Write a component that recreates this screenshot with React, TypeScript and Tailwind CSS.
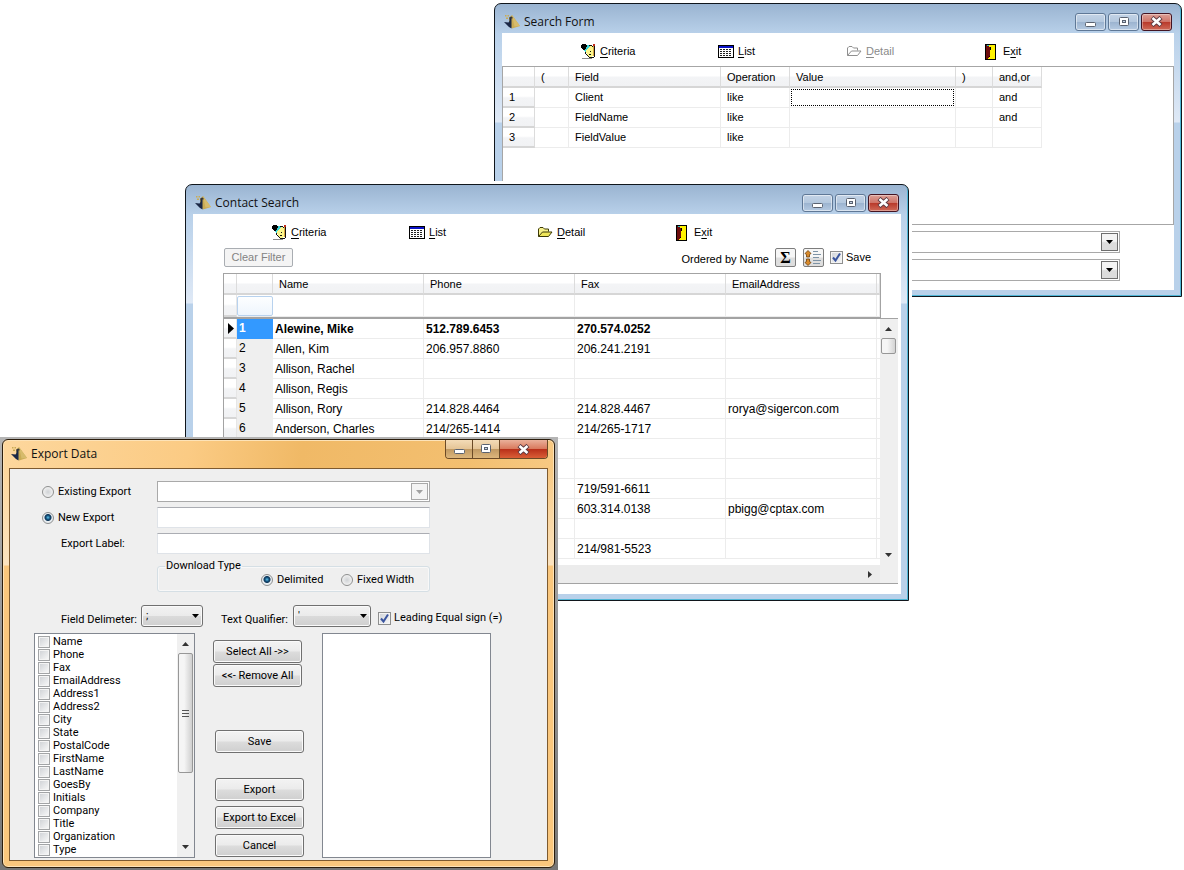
import type React from "react"
import { useState } from "react"
import clsx from "clsx"

const ARIAL = "font-['Liberation_Sans',Arial,sans-serif]"

/* ---------- icons ---------- */

function AppIcon() {
  return (
    <svg width="16" height="16" viewBox="0 0 16 16" aria-hidden="true">
      <path d="M1 1h1.500v1.500H1zM3.500 1h1.500v1.500H3.500zM2 3.500h2V5H2z" fill="#c9ab55" />
      <path d="M8 1L16 12L8 14.500L5 10V4Z" fill="#c9ab55" />
      <path d="M8 1L16 12L10.500 12.500Z" fill="#d6bb6c" />
      <path d="M0 8L4.500 8.500L5.500 7V3.500L7.500 3V14.500L5 13Z" fill="#1b2846" />
      <path d="M5.500 3.500L7 2.500L8.500 3V4.500H5.500Z" fill="#3b3a3a" />
    </svg>
  )
}

function CriteriaIcon() {
  return (
    <svg width="15" height="15" viewBox="0 0 15 15" shapeRendering="crispEdges" aria-hidden="true">
      <path d="M8 2h3v1h1v9h-1v1h-3v-1h-1v-1h-1v-2h-1v-3h1v-2h1v-1h1z" fill="#fbf58a" />
      <path d="M1 0h4v1h1v2h-1v2h-1v1h-2v-1h-1v-1h-1v-3h1z" fill="#000" />
      <path d="M6 1h2v1h1v1h-1v1h-1v1h-1v1h-1v2h-1v-1h-1v-1h1v-1h1v-2h1z" fill="#3fd6da" />
      <path d="M8 1h3v1H8zM11 2h1v1h-1zM4 8h1v2H4zM5 10h1v1H5zM6 11h1v1H6zM7 12h1v1H7zM8 13h5v1H8zM9 7h1v1H9zM8 10h2v1H8z" fill="#111" />
      <path d="M12 0h2v2h-2z" fill="#c22a1a" />
      <path d="M12 2h1v10h-1z" fill="#d9a441" />
      <path d="M13 2h1v11h-1zM12 13h1v1h-1z" fill="#111" />
      <path d="M1 14h10v1H1z" fill="#8a8a8a" />
    </svg>
  )
}

function ListIcon() {
  return (
    <svg width="16" height="13" viewBox="0 0 16 13" shapeRendering="crispEdges" aria-hidden="true">
      <path d="M0 0h16v13H0z" fill="#000" />
      <path d="M1 1h14v2H1z" fill="#0a12c8" />
      <path d="M1 3h14v9H1z" fill="#fff" />
      <path
        d="M2 5H14M2 7H14M2 9H14M2 11H14"
        transform="translate(0 -.5)"
        stroke="#222"
        strokeDasharray="2 1"
      />
    </svg>
  )
}

function FolderIcon({ disabled }: { disabled?: boolean }) {
  return (
    <svg width="15" height="11" viewBox="0 0 15 11" aria-hidden="true">
      <path
        d="M.5 9.500V2L2 .5H5L6.500 2H10.500V4.500"
        fill={disabled ? "#fff" : "#f6f08a"}
        stroke={disabled ? "#8f8f8f" : "#3d3b08"}
      />
      <path
        d="M.5 9.500L4.500 5H14L10.500 9.500Z"
        fill={disabled ? "#fff" : "#efe65a"}
        stroke={disabled ? "#8f8f8f" : "#3d3b08"}
      />
    </svg>
  )
}

function ExitIcon() {
  return (
    <svg width="11" height="16" viewBox="0 0 11 16" shapeRendering="crispEdges" aria-hidden="true">
      <path d="M0 0h11v16H0z" fill="#000" />
      <path d="M4 1h6v14H3v-2h1z" fill="#fff200" />
      <path d="M1 1h3v2h1v9H4v2H3v1H1z" fill="#6e0d0d" />
      <path d="M2 1h2v1H2z" fill="#2ec4c4" />
      <path d="M5 3h1v3H5zM4 12h1v1H4z" fill="#000" />
    </svg>
  )
}

function SortIcon() {
  return (
    <svg width="18" height="16" viewBox="0 0 18 16" aria-hidden="true">
      <path d="M4 .5L7 3.500L5.500 4.500V7H2.500V4.500L1 3.500Z" fill="#d98a2b" stroke="#6d3f0b" strokeWidth=".8" />
      <path d="M4 15.500L7 12.500L5.500 11.500V9H2.500V11.500L1 12.500Z" fill="#d98a2b" stroke="#6d3f0b" strokeWidth=".8" />
      <path d="M9 1.500h5M9 4.500h8M9 7.500h6M9 10.500h8M9 13.500h7" stroke="#7d93a6" />
    </svg>
  )
}

function Arrow({ dir, className }: { dir: "up" | "down" | "right"; className?: string }) {
  const d = { up: "M0 4h7L3.500 0z", down: "M0 0h7L3.500 4z", right: "M0 0v7l4-3.500z" }[dir]
  const right = dir === "right"
  return (
    <svg
      className={className}
      width={right ? 4 : 7}
      height={right ? 7 : 4}
      viewBox={right ? "0 0 4 7" : "0 0 7 4"}
      fill="currentColor"
      aria-hidden="true"
    >
      <path d={d} />
    </svg>
  )
}

function MinGlyph() {
  return (
    <svg width="13" height="12" viewBox="0 0 13 12" aria-hidden="true">
      <rect x="1.500" y="6.500" width="10" height="4" rx="1" fill="#fff" stroke="#5a6270" />
    </svg>
  )
}

function MaxGlyph() {
  return (
    <svg width="12" height="10" viewBox="0 0 12 10" aria-hidden="true">
      <rect x="1.500" y=".5" width="9" height="8" rx="1" fill="#fff" stroke="#5a6270" />
      <rect x="4.500" y="3.500" width="3" height="2" fill="#c7d5e6" stroke="#5a6270" />
    </svg>
  )
}

function CloseGlyph() {
  return (
    <svg width="13" height="11" viewBox="0 0 13 11" aria-hidden="true">
      <path d="M2 1.500L11 9.500M11 1.500L2 9.500" stroke="#5b3a42" strokeWidth="4.400" />
      <path d="M2.500 2L10.500 9M10.500 2L2.500 9" stroke="#fff" strokeWidth="2.600" />
    </svg>
  )
}

/* ---------- shared pieces ---------- */

function Title({ children }: { children: React.ReactNode }) {
  return (
    <>
      <AppIcon />
      <h2 className="ml-1 font-['Open_Sans','Segoe_UI',sans-serif] text-xs text-[#111]">{children}</h2>
    </>
  )
}

const captionBtn = "grid h-[18px] w-[31px] place-items-center rounded-[3px] border"
const blueBtn =
  "border-[#5f7896] bg-[linear-gradient(#c3d3e6_0,#b4c8de_48%,#9cb4d0_52%,#b5cae2_100%)] shadow-[inset_0_0_0_1px_rgba(255,255,255,.5)]"

function BlueWindow({ title, className, children }: { title: string; className: string; children: React.ReactNode }) {
  return (
    <section
      aria-label={title}
      className={clsx(
        "absolute rounded-t-[7px] border border-[#10161c] px-[7px] pb-[6px]",
        "bg-[linear-gradient(#9ab4d1_0,#b9d1ea_30px,#dfe9f6_118px,#b9d1ea_119px)]",
        className
      )}
    >
      <header className="flex h-[29px] items-center pl-[2px] pt-[6px]">
        <Title>{title}</Title>
        <div className="ml-auto flex gap-[2px] pr-[2px]">
          <button aria-label="Minimize" className={clsx(captionBtn, blueBtn)}><MinGlyph /></button>
          <button aria-label="Maximize" className={clsx(captionBtn, blueBtn)}><MaxGlyph /></button>
          <button
            aria-label="Close"
            className={clsx(
              captionBtn,
              "border-[#431422] bg-[linear-gradient(#dca097_0,#cf7468_48%,#b93a2b_52%,#cf6a58_100%)] shadow-[inset_0_0_0_1px_rgba(255,255,255,.35)]"
            )}
          >
            <CloseGlyph />
          </button>
        </div>
      </header>
      <div className="bg-white">{children}</div>
    </section>
  )
}

function ToolButton({ icon, label, hot = 0, disabled }: { icon: React.ReactNode; label: string; hot?: number; disabled?: boolean }) {
  return (
    <button disabled={disabled} className="flex items-center gap-1 text-[11px] text-black disabled:text-[#8a8a8a]">
      {icon}
      <span>
        {label.slice(0, hot)}
        <span className="underline underline-offset-2">{label[hot]}</span>
        {label.slice(hot + 1)}
      </span>
    </button>
  )
}

function Toolbar({ detailDisabled }: { detailDisabled?: boolean }) {
  return (
    <div role="toolbar" className="grid h-[33px] grid-cols-[137px_129px_138px_1fr] pl-[79px] pt-1">
      <ToolButton icon={<CriteriaIcon />} label="Criteria" />
      <ToolButton icon={<ListIcon />} label="List" />
      <ToolButton icon={<FolderIcon disabled={detailDisabled} />} label="Detail" disabled={detailDisabled} />
      <ToolButton icon={<span className="pr-[3px]"><ExitIcon /></span>} label="Exit" hot={1} />
    </div>
  )
}

function Check({ id, checked, onChange }: { id: string; checked: boolean; onChange: () => void }) {
  return (
    <span className="relative block size-[13px] shrink-0">
      <input
        id={id}
        type="checkbox"
        checked={checked}
        onChange={onChange}
        className="peer block size-[13px] appearance-none border border-[#8e8f8f] bg-[linear-gradient(135deg,#cfd3d8,#f8f8f8)] shadow-[inset_0_0_0_1px_#f4f4f4]"
      />
      <svg className="pointer-events-none absolute inset-0 hidden peer-checked:block" width="13" height="13" viewBox="0 0 13 13" aria-hidden="true">
        <path d="M3 6.500L5.500 9.500L10 2.500" fill="none" stroke="#3a559f" strokeWidth="2" />
      </svg>
    </span>
  )
}

const radioCls =
  "size-3 shrink-0 appearance-none rounded-full border border-[#8e8f8f] bg-[radial-gradient(circle,#cfd2d5_0,#f1f1f1_5px)] checked:bg-[radial-gradient(circle_at_50%_45%,#5cc3ea_0,#14507c_2px,#0d3557_3px,#e8edf1_4px)]"

/* ---------- search form ---------- */

const conditions = [
  { field: "Client", op: "like", join: "and" },
  { field: "FieldName", op: "like", join: "and" },
  { field: "FieldValue", op: "like", join: "" },
]

const headBg = "bg-[linear-gradient(#fff_0,#fff_45%,#f3f4f6_55%,#f1f2f4_100%)]"

function ComboRow({ label }: { label: string }) {
  return (
    <div className="relative ml-[60px] mr-[54px]">
      <select aria-label={label} className="block h-[22px] w-full appearance-none border border-[#a9a9a9] bg-white" />
      <span className="pointer-events-none absolute right-[2px] top-[2px] grid h-[18px] w-[17px] place-items-center border border-[#6e6e6e] bg-[linear-gradient(#f4f4f4_45%,#dcdcdc_55%)]">
        <Arrow dir="down" />
      </span>
    </div>
  )
}

function SearchForm() {
  const th = clsx("h-[21px] border-b-2 border-r border-b-[#d6d6d6] border-r-[#dcdcdc] px-[6px] pt-[2px] text-left font-normal", headBg)
  const td = "h-5 border-b border-r border-[#ececec] px-[6px]"
  return (
    <BlueWindow title="Search Form" className="left-[494px] top-[3px] w-[688px] shadow-[inset_-1px_-1px_0_#4fb6d6]">
      <Toolbar detailDisabled />
      <div className="h-[159px] border border-[#a6a6a6]">
        <table className="w-[539px] table-fixed border-separate border-spacing-0 text-[11px] text-black">
          <colgroup>
            <col className="w-8" />
            <col className="w-[34px]" />
            <col className="w-[152px]" />
            <col className="w-[69px]" />
            <col className="w-[166px]" />
            <col className="w-[37px]" />
            <col className="w-[49px]" />
          </colgroup>
          <thead>
            <tr>
              {["", "(", "Field", "Operation", "Value", ")", "and,or"].map((h, i) => (
                <th key={i} className={th}>{h}</th>
              ))}
            </tr>
          </thead>
          <tbody>
            {conditions.map((c, i) => (
              <tr key={c.field}>
                <th scope="row" className={clsx("h-5 border-b-2 border-r border-b-[#d6d6d6] border-r-[#dcdcdc] px-[6px] pt-px text-left font-normal", headBg)}>
                  {i + 1}
                </th>
                <td className={td} />
                <td className={td}>{c.field}</td>
                <td className={td}>{c.op}</td>
                <td className="h-5 border-b border-r border-[#ececec] p-px">
                  <input
                    aria-label={`Value ${i + 1}`}
                    className={clsx("block h-[17px] w-full bg-white px-1 outline-none", i === 0 && "border border-dotted border-black")}
                  />
                </td>
                <td className={td} />
                <td className={td}>{c.join}</td>
              </tr>
            ))}
          </tbody>
        </table>
      </div>
      <div className="flex flex-col gap-[6px] pb-[9px] pt-[6px]">
        <ComboRow label="Saved search" />
        <ComboRow label="Saved list" />
      </div>
    </BlueWindow>
  )
}

/* ---------- contact search ---------- */

interface Contact {
  name?: string
  phone?: string
  fax?: string
  email?: string
}

const contacts: Contact[] = [
  { name: "Alewine, Mike", phone: "512.789.6453", fax: "270.574.0252" },
  { name: "Allen, Kim", phone: "206.957.8860", fax: "206.241.2191" },
  { name: "Allison, Rachel" },
  { name: "Allison, Regis" },
  { name: "Allison, Rory", phone: "214.828.4464", fax: "214.828.4467", email: "rorya@sigercon.com" },
  { name: "Anderson, Charles", phone: "214/265-1414", fax: "214/265-1717" },
  {},
  {},
  { fax: "719/591-6611" },
  { fax: "603.314.0138", email: "pbigg@cptax.com" },
  {},
  { fax: "214/981-5523" },
]

function ContactCols() {
  return (
    <colgroup>
      <col className="w-[13px]" />
      <col className="w-[36px]" />
      <col className="w-[151px]" />
      <col className="w-[151px]" />
      <col className="w-[151px]" />
      <col className="w-[151px]" />
      <col className="w-[3px]" />
    </colgroup>
  )
}

const gridTable = "w-[656px] table-fixed border-separate border-spacing-0 text-black"
const smallBtn = "grid h-[19px] w-[21px] place-items-center rounded-[2px] border border-[#7d7d7d] bg-[linear-gradient(#f6f6f6_45%,#dedede_55%)]"

function ContactSearch() {
  const [save, setSave] = useState(true)
  const td = "h-5 overflow-hidden whitespace-nowrap border-b border-r border-[#ececec] px-[2px] pt-px"
  const stub = clsx("border-b-2 border-r border-b-[#d6d6d6] border-r-[#e6e6e6]", headBg)
  return (
    <BlueWindow
      title="Contact Search"
      className="left-[185px] top-[184px] w-[724px] shadow-[inset_-1px_-1px_0_#4fb6d6,0_0_0_3px_#fff]"
    >
      <Toolbar />
      <div className="flex h-[21px] items-center pl-[31px] pr-[30px] text-[11px]">
        <button disabled className="h-[19px] w-[69px] rounded-[2px] border border-[#a9adb2] bg-[#f4f4f4] text-[#838383]">
          Clear Filter
        </button>
        <span className="ml-auto pt-[3px]">Ordered by Name</span>
        <button aria-label="Sum" className={clsx(smallBtn, "ml-[6px] font-['Liberation_Serif',serif] text-base leading-[17px] font-bold")}>
          Σ
        </button>
        <button aria-label="Sort order" className={clsx(smallBtn, "ml-[7px]")}><SortIcon /></button>
        <label htmlFor="save-order" className="ml-[6px] flex items-center gap-[3px]">
          <Check id="save-order" checked={save} onChange={() => setSave(!save)} />
          Save
        </label>
      </div>
      <div className="pb-[10px] pl-[30px] pr-[3px] pt-[5px]">
        <div className="w-[658px] border border-[#a3a3a3]">
          <table className={clsx(gridTable, "text-[11px]")}>
            <ContactCols />
            <thead>
              <tr>
                {["", "", "Name", "Phone", "Fax", "EmailAddress", ""].map((h, i) => (
                  <th
                    key={i}
                    className={clsx(
                      "h-[21px] border-b-2 border-r border-b-[#d6d6d6] border-r-[#dcdcdc] text-left font-normal",
                      i > 1 && i < 6 ? "px-[6px] pt-[2px]" : "p-0",
                      headBg
                    )}
                  >
                    {h}
                  </th>
                ))}
              </tr>
            </thead>
            <tbody>
              <tr>
                <td className={clsx("h-[22px] p-0", stub)} />
                <td className="h-[22px] border-b border-[#ececec] p-0">
                  <input aria-label="Row filter" className="block h-5 w-full rounded-[2px] border border-[#b8d2ee] bg-[linear-gradient(#fdfeff,#eef5fd)] outline-none" />
                </td>
                {[0, 1, 2, 3, 4].map((i) => (
                  <td key={i} className="border-b border-r border-[#ececec] p-0" />
                ))}
              </tr>
            </tbody>
          </table>
        </div>
        <div className="grid grid-cols-[1fr_18px] border border-[#a3a3a3]">
          <table className={clsx(gridTable, "mb-[6px] text-xs")}>
            <ContactCols />
            <tbody>
              {contacts.map((c, i) => (
                <tr key={i} className={clsx(i === 0 && "font-bold")}>
                  <td className={clsx("h-5 p-0 pl-[4px]", stub)}>
                    {i === 0 && (
                      <svg width="6" height="11" viewBox="0 0 6 11" aria-label="current row"><path d="M0 0v11l6-5.500z" /></svg>
                    )}
                  </td>
                  <td
                    className={clsx(
                      "h-5 p-0 pl-[2px] align-top leading-[18px]",
                      i === 0 ? "bg-[#3399ff] text-white" : "bg-[#efefef]"
                    )}
                  >
                    {i < 6 ? i + 1 : ""}
                  </td>
                  <td className={td}>{c.name}</td>
                  <td className={td}>{c.phone}</td>
                  <td className={td}>{c.fax}</td>
                  <td className={td}>{c.email}</td>
                  <td className="border-b border-[#ececec] p-0" />
                </tr>
              ))}
            </tbody>
          </table>
          <div className="flex flex-col items-center bg-[#efefef] py-[8px] pr-[2px] text-[#333]">
            <Arrow dir="up" />
            <div className="mt-[7px] h-4 w-[15px] rounded-[2px] border border-[#979797] bg-[linear-gradient(90deg,#f5f5f5_40%,#d3d3d3)]" />
            <Arrow dir="down" className="mt-auto" />
          </div>
          <div className="flex h-[18px] items-center justify-end bg-[#ececec] pr-[8px] text-[#333]">
            <Arrow dir="right" />
          </div>
          <div className="bg-[#efefef]" />
        </div>
      </div>
    </BlueWindow>
  )
}

/* ---------- export dialog ---------- */

const exportFields = [
  "Name", "Phone", "Fax", "EmailAddress", "Address1", "Address2", "City", "State", "PostalCode",
  "FirstName", "LastName", "GoesBy", "Initials", "Company", "Title", "Organization", "Type",
]

const pushBtn =
  "h-[23px] w-[89px] rounded-[3px] border border-[#707070] bg-[linear-gradient(#f3f3f3_0,#ebebeb_48%,#dcdcdc_52%,#cfcfcf_100%)] shadow-[inset_0_0_0_1px_#fafafa]"
const textBox = "block h-[21px] w-[273px] border border-[#dfe3e8] border-t-[#abadb3] bg-white px-1 outline-none"
const goldBtn = "grid w-[27px] place-items-center border-r border-[#6b4a26] bg-[linear-gradient(#f4dcb8_0,#e5c597_48%,#c19a63_52%,#dcb67c_100%)]"

function MiniSelect({ id, value, className }: { id: string; value: string; className: string }) {
  return (
    <span className={clsx("relative block", className)}>
      <select
        id={id}
        className="block h-[22px] w-full appearance-none rounded-[3px] border border-[#707070] bg-[linear-gradient(#f2f2f2_0,#ebebeb_48%,#dadada_52%,#cfcfcf_100%)] px-1 shadow-[inset_0_0_0_1px_#fafafa]"
      >
        <option>{value}</option>
      </select>
      <Arrow dir="down" className="pointer-events-none absolute right-1 top-[9px]" />
    </span>
  )
}

function ExportDialog() {
  const [mode, setMode] = useState("new")
  const [type, setType] = useState("delimited")
  const [leading, setLeading] = useState(true)
  const [picked, setPicked] = useState<string[]>([])

  const toggle = (f: string) => setPicked(picked.includes(f) ? picked.filter((p) => p !== f) : [...picked, f])

  return (
    <div className="absolute left-0 top-[437px] w-[558px] bg-[linear-gradient(#b4b4b4,#767676)] pb-[2px] pl-[2px] pr-[3px] pt-[2px]">
      <section
        aria-label="Export Data"
        className="rounded-[6px] border border-[#2b1d0c] bg-[linear-gradient(transparent_28px,#fbe3c0_125px,#fac77d_126px),linear-gradient(100deg,#fdd79d_0,#fbcb84_30%,#f0b966_48%,#f3bf70_75%,#fbd192_100%)] px-[6px] pb-[6px] shadow-[inset_0_0_0_1px_#fde3b8]"
      >
        <header className="flex h-7 items-start pl-[2px]">
          <div className="flex items-center pt-[6px]">
            <Title>Export Data</Title>
          </div>
          <div className="ml-auto flex h-[19px] overflow-hidden rounded-b-[4px] border border-t-0 border-[#6b4a26]">
            <button aria-label="Minimize" className={goldBtn}><MinGlyph /></button>
            <button aria-label="Maximize" className={goldBtn}><MaxGlyph /></button>
            <button aria-label="Close" className="grid w-[47px] place-items-center bg-[linear-gradient(#eab09a_0,#d97a5e_48%,#b9301a_52%,#da5f37_100%)]"><CloseGlyph /></button>
          </div>
        </header>

        <form className="border border-[#7d5a30] bg-[#efefef] pb-[2px] pt-3 font-[Roboto,Tahoma,sans-serif] text-[11px] leading-[14px] text-black">
          <div className="flex flex-col gap-[5px]">
            <div className="flex items-center">
              <label className="flex w-[147px] items-center gap-1 pl-8">
                <input type="radio" name="mode" className={radioCls} checked={mode === "existing"} onChange={() => setMode("existing")} />
                Existing Export
              </label>
              <span className="relative block">
                <select aria-label="Existing export" disabled className="block h-[21px] w-[273px] appearance-none border border-[#a9a9a9] bg-white opacity-100" />
                <span className="pointer-events-none absolute right-[2px] top-[2px] grid h-[17px] w-[17px] place-items-center border border-[#a9a9a9] bg-[#f4f4f4] text-[#a0a0a0]">
                  <Arrow dir="down" />
                </span>
              </span>
            </div>
            <div className="flex items-center">
              <label className="flex w-[147px] items-center gap-1 pl-8">
                <input type="radio" name="mode" className={radioCls} checked={mode === "new"} onChange={() => setMode("new")} />
                New Export
              </label>
              <input aria-label="New export name" className={textBox} />
            </div>
            <div className="flex items-center">
              <label htmlFor="export-label" className="w-[147px] pl-[51px]">Export Label:</label>
              <input id="export-label" className={textBox} />
            </div>
          </div>

          <fieldset className="ml-[147px] mt-[5px] flex w-[273px] rounded-[3px] border border-[#d5dfe5] pb-[4px] pl-[103px] shadow-[inset_0_0_0_1px_#f8f8f8]">
            <legend className="-ml-24 px-px">Download Type</legend>
            <label className="flex w-20 items-center gap-1">
              <input type="radio" name="type" className={radioCls} checked={type === "delimited"} onChange={() => setType("delimited")} />
              Delimited
            </label>
            <label className="flex items-center gap-1">
              <input type="radio" name="type" className={radioCls} checked={type === "fixed"} onChange={() => setType("fixed")} />
              Fixed Width
            </label>
          </fieldset>

          <div className="mt-[13px] flex items-end pl-[51px]">
            <label htmlFor="delimiter" className="w-20">Field Delimeter:</label>
            <MiniSelect id="delimiter" value=";" className="w-[62px]" />
            <label htmlFor="qualifier" className="ml-[18px] w-[72px]">Text Qualifier:</label>
            <MiniSelect id="qualifier" value="'" className="w-[78px]" />
            <label htmlFor="leading-equal" className="ml-[7px] flex items-center gap-[3px] self-center pt-1">
              <Check id="leading-equal" checked={leading} onChange={() => setLeading(!leading)} />
              Leading Equal sign (=)
            </label>
          </div>

          <div className="mt-[6px] flex pl-6">
            <div className="flex w-[161px] border border-[#828790] bg-white">
              <ul className="flex-1 pb-px pl-[3px] pt-px">
                {exportFields.map((f) => (
                  <li key={f}>
                    <label className="flex h-[13px] items-center gap-[3px] leading-[13px]">
                      <input
                        type="checkbox"
                        checked={picked.includes(f)}
                        onChange={() => toggle(f)}
                        className="size-3 appearance-none border border-[#a2a4a6] bg-[linear-gradient(135deg,#cdd0d4,#fafafa)] shadow-[inset_0_0_0_1px_#f4f4f4] checked:bg-[#3a559f]"
                      />
                      {f}
                    </label>
                  </li>
                ))}
              </ul>
              <div className="flex w-[17px] flex-col items-center bg-[#f0f0f0] py-[8px] text-[#333]">
                <Arrow dir="up" />
                <div className="mt-[7px] flex h-[120px] w-[15px] flex-col items-center justify-center gap-[2px] rounded-[2px] border border-[#979797] bg-[linear-gradient(90deg,#f5f5f5_40%,#cfcfcf)]">
                  <span className="h-px w-[7px] bg-[#555]" />
                  <span className="h-px w-[7px] bg-[#555]" />
                  <span className="h-px w-[7px] bg-[#555]" />
                </div>
                <Arrow dir="down" className="mt-auto" />
              </div>
            </div>

            <div className="ml-[18px] flex w-[109px] flex-col pt-[7px]">
              <button type="button" className={pushBtn} onClick={() => setPicked(exportFields)}>Select All -&gt;&gt;</button>
              <button type="button" className={clsx(pushBtn, "mt-px")} onClick={() => setPicked([])}>&lt;&lt;- Remove All</button>
              <div className="flex flex-col gap-[5px] pl-[2px] pt-[43px]">
                <button type="button" className={clsx(pushBtn, "mb-5")}>Save</button>
                <button type="button" className={pushBtn}>Export</button>
                <button type="button" className={pushBtn}>Export to Excel</button>
                <button type="button" className={pushBtn}>Cancel</button>
              </div>
            </div>

            <select multiple aria-label="Fields to export" className="w-[169px] border border-[#828790] bg-white" />
          </div>
        </form>
      </section>
    </div>
  )
}

export default function App() {
  return (
    <main className={clsx("relative min-h-screen overflow-hidden bg-white", ARIAL)}>
      <SearchForm />
      <ContactSearch />
      <ExportDialog />
    </main>
  )
}
